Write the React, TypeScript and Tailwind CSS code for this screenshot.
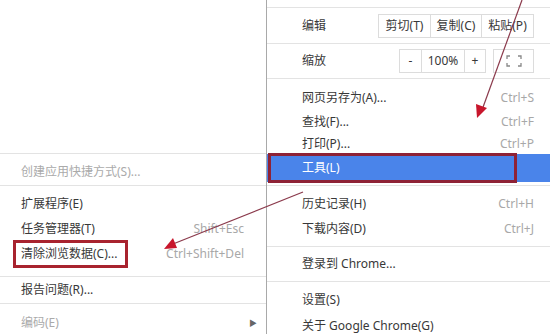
import React from "react";

const font = { fontFamily: '"Noto Sans", "Noto Sans CJK SC", sans-serif' };

function Item({
  label,
  shortcut,
  muted,
  className = "",
}: {
  label: string;
  shortcut?: string;
  muted?: boolean;
  className?: string;
}) {
  return (
    <div className={`flex items-center justify-between ${className}`}>
      <span className={muted ? "text-[#aaa]" : "text-[#383838]"}>{label}</span>
      {shortcut && <span className="text-[#a8a8a8]">{shortcut}</span>}
    </div>
  );
}

function Sep() {
  return <div className="h-px bg-[#e3e3e3]" />;
}

function FullscreenIcon() {
  return (
    <svg width="16" height="12" viewBox="0 0 16 12" fill="none" stroke="#888" strokeWidth="1.3">
      <path d="M1 4V1h3M12 1h3v3M15 8v3h-3M4 11H1V8" />
    </svg>
  );
}

export default function App() {
  return (
    <div
      className="relative flex h-[334px] w-[550px] items-start overflow-hidden bg-white text-[12px]"
      style={font}
    >
      {/* 子菜单：工具 */}
      <div className="h-[334px] w-[267px] shrink-0 overflow-hidden border-r border-[#a9a9a9]">
        <div className="h-[153px]" />
        <Sep />
        <div className="h-[31px] pl-[21px] pr-[22px] pt-[5px]">
          <Item label="创建应用快捷方式(S)..." muted className="h-full" />
        </div>
        <Sep />
        <div className="pl-[21px] pr-[22px] pt-[5px]">
          <Item label="扩展程序(E)" className="h-[25px]" />
          <Item label="任务管理器(T)" shortcut="Shift+Esc" className="h-[25px]" />
          <div className="relative">
            <Item label="清除浏览数据(C)..." shortcut="Ctrl+Shift+Del" className="h-[25px]" />
            <div className="absolute left-[-8px] top-[-1px] h-[28px] w-[115px] border-[3px] border-[#a8232f]" />
          </div>
        </div>
        <div className="h-[10px]" />
        <Sep />
        <div className="flex h-[26px] items-center pl-[21px] pr-[22px]">
          <Item label="报告问题(R)..." className="h-full" />
        </div>
        <Sep />
        <div className="flex h-[38px] items-center justify-between pl-[21px] pr-[9px]">
          <span className="text-[#aaa]">编码(E)</span>
          <span className="text-[8px] text-[#666]">▶</span>
        </div>
      </div>

      {/* 主菜单 */}
      <div className="h-[334px] flex-1 overflow-hidden">
        <div className="h-[7px]" />
        <Sep />
        <div className="flex h-[35px] items-center justify-between pl-[35px] pr-[16px]">
          <span className="text-[#383838]">编辑</span>
          <div className="flex h-[24px] border border-[#dcdcdc] text-[#383838]">
            <span className="flex w-[52px] items-center justify-center border-r border-[#dcdcdc]">剪切(T)</span>
            <span className="flex w-[51px] items-center justify-center border-r border-[#dcdcdc]">复制(C)</span>
            <span className="flex w-[51px] items-center justify-center">粘贴(P)</span>
          </div>
        </div>
        <Sep />
        <div className="flex h-[34px] items-center justify-between pl-[35px] pr-[16px]">
          <span className="text-[#383838]">缩放</span>
          <div className="flex items-center gap-[7px]">
            <div className="flex h-[24px] border border-[#dcdcdc] text-[#383838]">
              <span className="flex w-[22px] items-center justify-center border-r border-[#dcdcdc]">-</span>
              <span className="flex w-[43px] items-center justify-center border-r border-[#dcdcdc]">100%</span>
              <span className="flex w-[20px] items-center justify-center">+</span>
            </div>
            <div className="flex h-[24px] w-[41px] items-center justify-center border border-[#dcdcdc]">
              <FullscreenIcon />
            </div>
          </div>
        </div>
        <Sep />
        <div className="pl-[35px] pr-[16px] pt-[7px]">
          <Item label="网页另存为(A)..." shortcut="Ctrl+S" className="h-[24px]" />
          <Item label="查找(F)..." shortcut="Ctrl+F" className="h-[24px]" />
          <Item label="打印(P)..." shortcut="Ctrl+P" className="h-[20px]" />
        </div>
        <div className="relative flex h-[28px] items-center bg-[#4a84ea] pl-[35px]">
          <span className="text-white">工具(L)</span>
          <div className="absolute left-px top-[-1px] h-[30px] w-[249px] border-[3px] border-[#8e2236]" />
        </div>
        <div className="h-[3px]" />
        <Sep />
        <div className="pl-[35px] pr-[16px] pt-[5px] pb-[5px]">
          <Item label="历史记录(H)" shortcut="Ctrl+H" className="h-[25px]" />
          <Item label="下载内容(D)" shortcut="Ctrl+J" className="h-[25px]" />
        </div>
        <Sep />
        <div className="flex h-[34px] items-center pl-[35px]">
          <span className="text-[#383838]">登录到 Chrome...</span>
        </div>
        <Sep />
        <div className="pl-[35px] pr-[16px] pt-[5px]">
          <Item label="设置(S)" className="h-[25px]" />
          <Item label="关于 Google Chrome(G)" className="h-[27px]" />
        </div>
      </div>

      {/* 标注箭头 */}
      <svg className="pointer-events-none absolute inset-0" width="550" height="334" viewBox="0 0 550 334">
        <line x1="522" y1="0" x2="482" y2="110" stroke="#8b3a4c" strokeWidth="1.2" />
        <polygon points="477,118 476,104 487,108" fill="#c8162c" />
        <line x1="303" y1="192" x2="173" y2="244" stroke="#8b3a4c" strokeWidth="1.2" />
        <polygon points="164,249 173,238 177,248" fill="#c8162c" />
      </svg>
    </div>
  );
}
